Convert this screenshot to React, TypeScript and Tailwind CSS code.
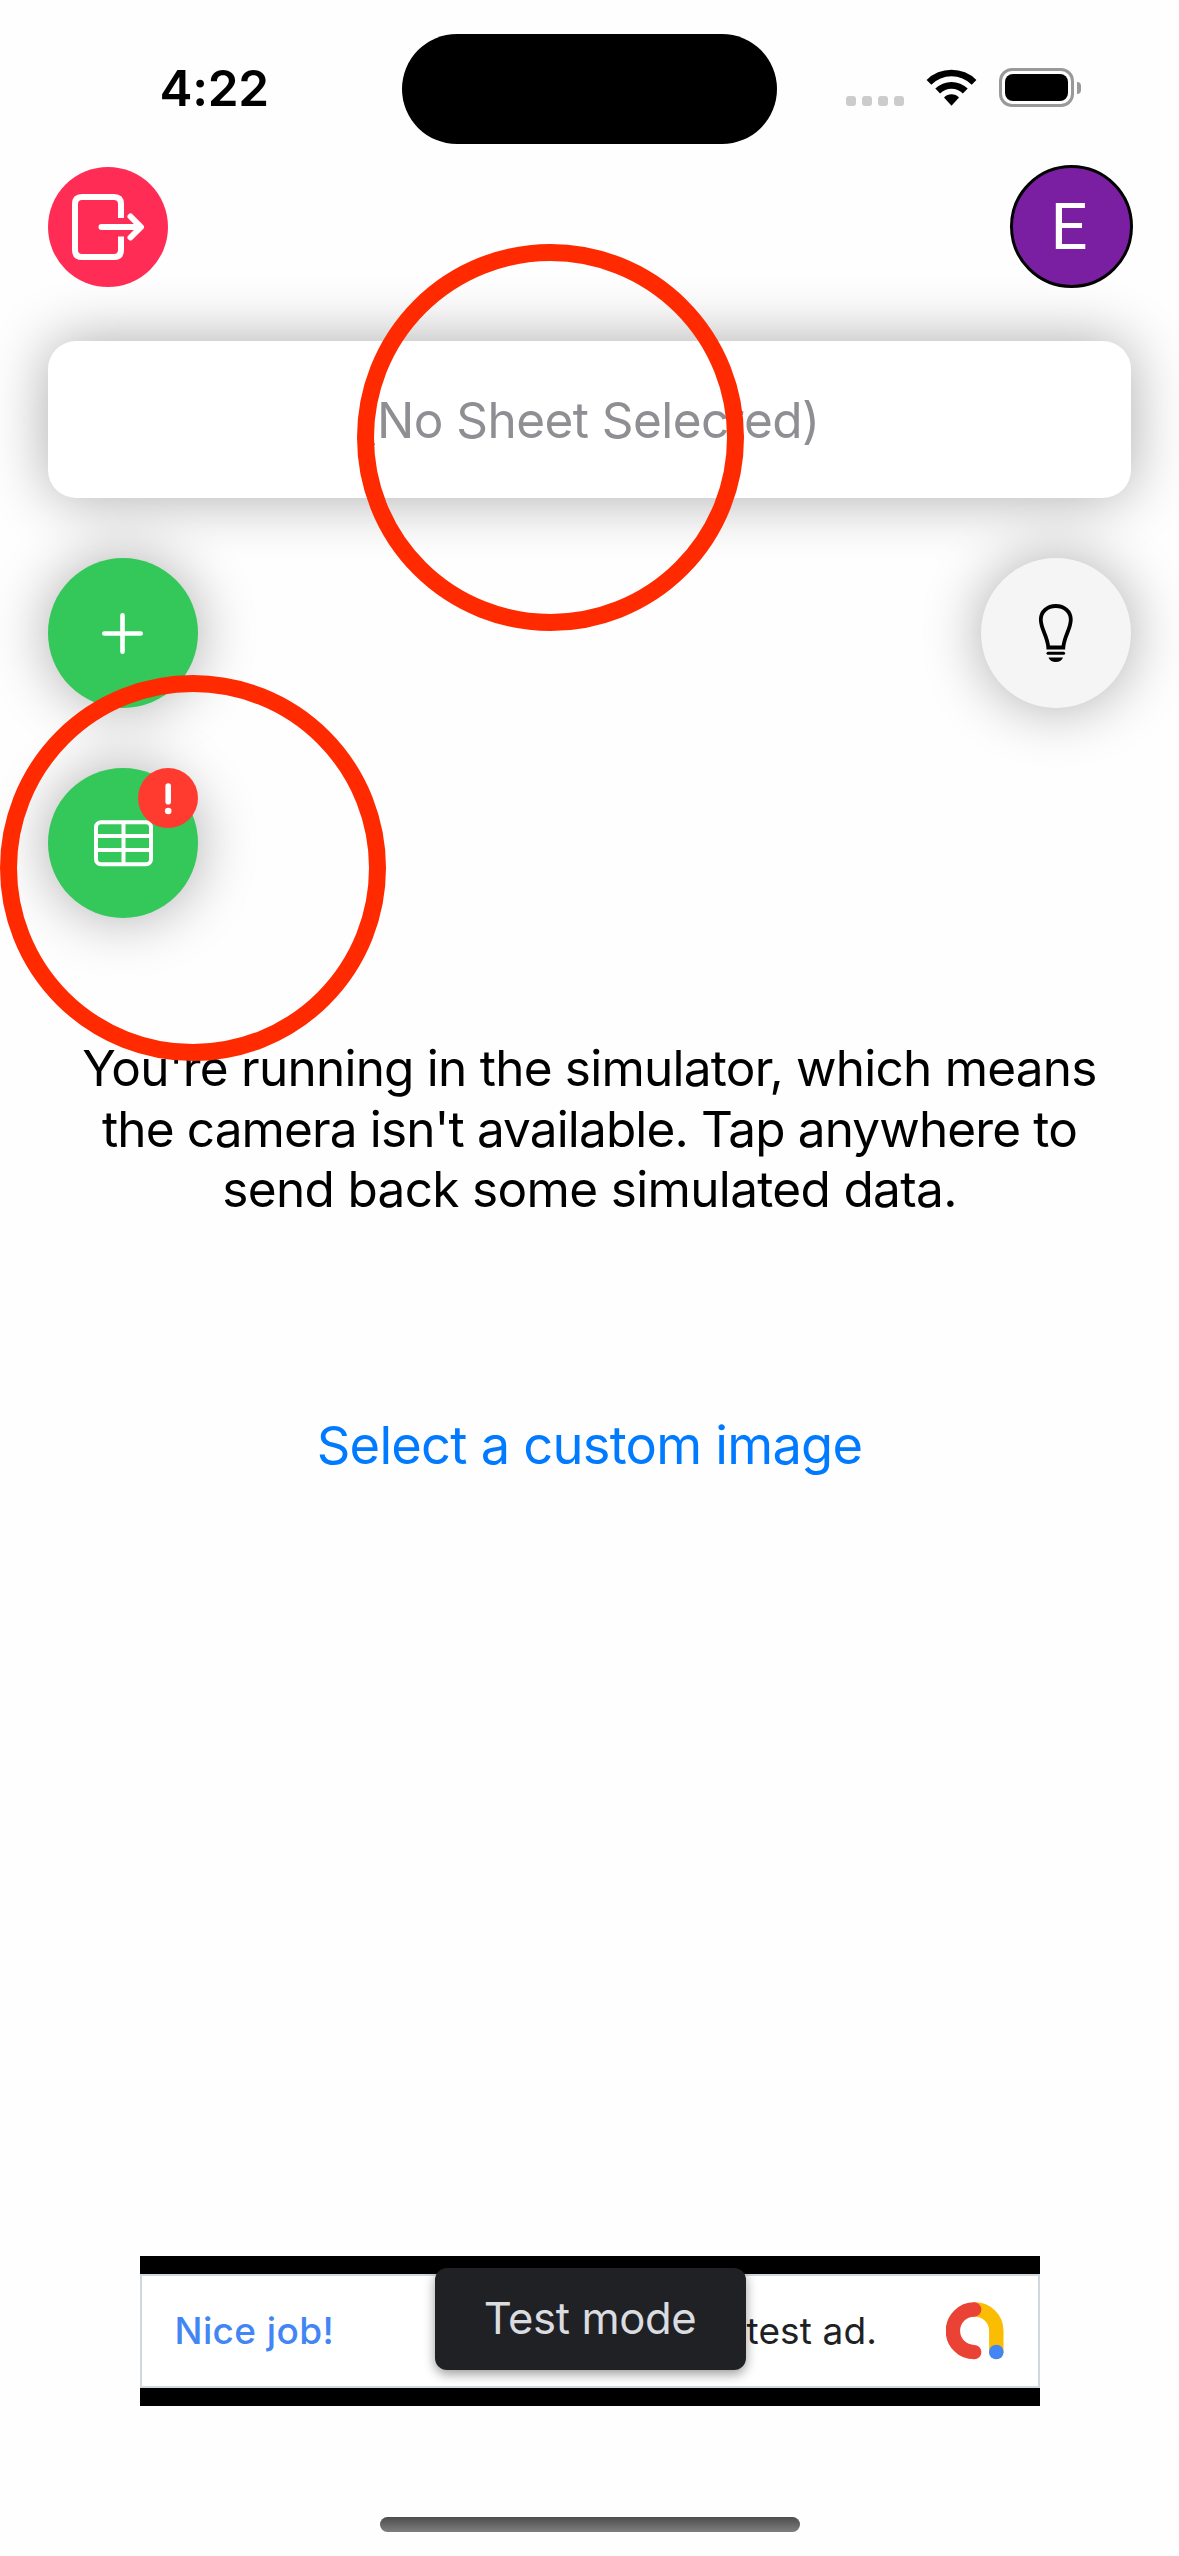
import React from "react";

function StatusBar() {
  return (
    <header className="grid h-[167px] shrink-0 grid-cols-[402px_375px_402px]">
      <div className="pl-[159.5px] pt-[57px] text-[49.5px] font-semibold leading-[62px] tracking-[-0.3px]">4:22</div>
      <div className="mt-[34px] h-[110px] rounded-full bg-black" />
      <div className="flex pl-[69px]">
        <div className="mt-[96px] flex h-[10px] gap-[6px]">
          <i className="size-[10px] rounded-[3px] bg-[#ccc]" />
          <i className="size-[10px] rounded-[3px] bg-[#ccc]" />
          <i className="size-[10px] rounded-[3px] bg-[#ccc]" />
          <i className="size-[10px] rounded-[3px] bg-[#ccc]" />
        </div>
        <svg className="ml-[22px] mt-[69px] h-[37px] w-[51px]" viewBox="0 0 51 37">
          <path d="M5.3 15.7Q2.9 13.3 0.6 11A35.2 35.2 0 0 1 50.4 11L45.7 15.7A28.5 28.5 0 0 0 5.3 15.7Z" />
          <path d="M9.3 19.6A22.9 22.9 0 0 1 41.7 19.6L36.9 24.4A16.2 16.2 0 0 0 14.1 24.4Z" />
          <path d="M18 28.4A10.6 10.6 0 0 1 33 28.4L25.5 36.8Z" />
        </svg>
        <div className="ml-[22px] mt-[68px] h-[39px] w-[75px] rounded-[13px] border-[3px] border-[#999] p-[3px]">
          <div className="h-full w-full rounded-[8px] bg-black" />
        </div>
        <div className="ml-[3px] mt-[82px] h-[12px] w-[4px] rounded-r-full bg-[#999]" />
      </div>
    </header>
  );
}

function AdBanner() {
  return (
    <section className="relative mx-auto mt-[778.5px] h-[150px] w-[900px] shrink-0 bg-black py-[18px]">
      <div className="flex h-[114px] items-center border-2 border-[#cfd8dc] bg-white pl-[33px] pr-[34px] text-[37px] leading-[44px]">
        <span className="w-[572px] font-medium tracking-[0.4px] text-[#4285f4]">Nice job!</span>
        <span className="tracking-[0.15px] text-[#202124]">test ad.</span>
        <svg className="ml-auto h-[58px] w-[58px]" viewBox="0 0 58 58" fill="none" strokeWidth="14.4" strokeLinecap="round">
          <path d="M28.8 7.5A21.3 21.3 0 0 1 50.3 28.8V50" stroke="#fbbc04" />
          <path d="M28.2 7.5A21.3 21.3 0 0 0 28.2 50.1" stroke="#ea4335" />
          <circle cx="50.3" cy="50" r="7.3" fill="#4285f4" />
        </svg>
      </div>
      <div className="absolute left-[295px] top-[12px] flex h-[102px] w-[311px] items-center justify-center rounded-[12px] bg-[#202124] text-[43.6px] leading-[52px] tracking-[-0.4px] text-[#dadce0] shadow-[0_4px_12px_rgba(0,0,0,0.4)]">
        Test mode
      </div>
    </section>
  );
}

export default function App() {
  return (
    <main className="relative flex h-[2556px] w-[1179px] flex-col overflow-hidden bg-[#fefefe] font-['Inter',sans-serif] text-black">
      <StatusBar />

      <div className="relative z-10 flex h-[120px] shrink-0 justify-between pl-[48px] pr-[46.5px]">
        <button className="size-[120px] rounded-full bg-[#ff2d55]">
          <svg className="size-[120px]" viewBox="0 0 120 120" fill="none" stroke="white" strokeWidth="6" strokeLinecap="round" strokeLinejoin="round">
            <path d="M73 51V37Q73 30 66 30H34Q27 30 27 37V83Q27 90 34 90H66Q73 90 73 83V69.5" strokeLinecap="butt" />
            <path d="M53.5 60H92M82.5 49.5L93 60L82.5 70.5" />
          </svg>
        </button>
        <div className="-mt-[2px] flex size-[123px] items-center justify-center rounded-full border-[3px] border-black bg-[#7b1fa2] pr-[4px] pt-[3px] font-['Roboto'] text-[65px] text-white">
          E
        </div>
      </div>

      <div className="mx-[48px] mt-[54px] h-[157px] shrink-0 rounded-[28px] bg-white pt-[49px] text-center text-[49.5px] leading-[60px] tracking-[-0.55px] text-[#8e8e93] shadow-[0_0_60px_rgba(0,0,0,0.33)]">
        (No Sheet Selected)
      </div>

      <div className="mt-[60px] flex shrink-0 justify-between px-[48px]">
        <div className="flex flex-col gap-[60px]">
          <button className="size-[150px] rounded-full bg-[#34c759] shadow-[0_0_60px_rgba(0,0,0,0.33)]">
            <svg className="size-[150px]" viewBox="0 0 150 150" fill="none" stroke="white" strokeWidth="4.6" strokeLinecap="round">
              <path d="M56.3 75.5H92.7M74.5 57.3V93.7" />
            </svg>
          </button>
          <button className="relative size-[150px] rounded-full bg-[#34c759] shadow-[0_0_60px_rgba(0,0,0,0.33)]">
            <svg className="size-[150px]" viewBox="0 0 150 150" fill="none" stroke="white" strokeWidth="4">
              <rect x="48" y="54.3" width="55" height="42" rx="5" />
              <path d="M48 68H103M48 82H103M75.5 54V96" />
            </svg>
            <span className="absolute right-0 top-0 size-[60px] rounded-full bg-[#ff3b30]">
              <svg className="size-[60px]" viewBox="0 0 60 60" fill="white">
                <rect x="27.4" y="15.2" width="5.6" height="21.4" rx="2.8" />
                <circle cx="30.2" cy="43" r="3.3" />
              </svg>
            </span>
          </button>
        </div>
        <button className="size-[150px] rounded-full bg-[#f5f5f5] shadow-[0_0_60px_rgba(0,0,0,0.33)]">
          <svg className="size-[150px]" viewBox="0 0 150 150" fill="none" stroke="black" strokeWidth="3.8">
            <path d="M67.3 89.5C66.5 78 59.8 71 59.8 61.5C59.8 53.5 66.5 48 74.8 48S89.8 53.5 89.8 61.5C89.8 71 83.1 78 82.3 89.5Z" />
            <path d="M67 95.3H82.6" strokeWidth="3" strokeLinecap="round" />
            <path d="M67.5 99.4H82C81 102.5 78 104 74.8 104S68.5 102.5 67.5 99.4Z" fill="black" stroke="none" />
          </svg>
        </button>
      </div>

      <div className="mt-[120px] shrink-0 whitespace-nowrap text-center text-[49.5px] leading-[60.5px]">
        <p className="tracking-[-0.77px]">You're running in the simulator, which means</p>
        <p className="tracking-[-0.87px]">the camera isn't available. Tap anywhere to</p>
        <p className="tracking-[-0.66px]">send back some simulated data.</p>
      </div>

      <button className="mt-[192px] h-[66px] shrink-0 whitespace-nowrap text-[52.4px] leading-[66px] tracking-[-0.75px] text-[#007aff]">
        Select a custom image
      </button>

      <AdBanner />

      <div className="mx-auto mt-[111px] h-[15px] w-[420px] shrink-0 rounded-full bg-linear-to-b from-[#4d4d4d] to-[#7f7f7f]" />

      <div className="pointer-events-none absolute left-[357px] top-[244px] z-20 size-[387px] rounded-full border-[17.5px] border-[#ff2a00]" />
      <div className="pointer-events-none absolute left-0 top-[675px] z-20 size-[386px] rounded-full border-[17.5px] border-[#ff2a00]" />
    </main>
  );
}
